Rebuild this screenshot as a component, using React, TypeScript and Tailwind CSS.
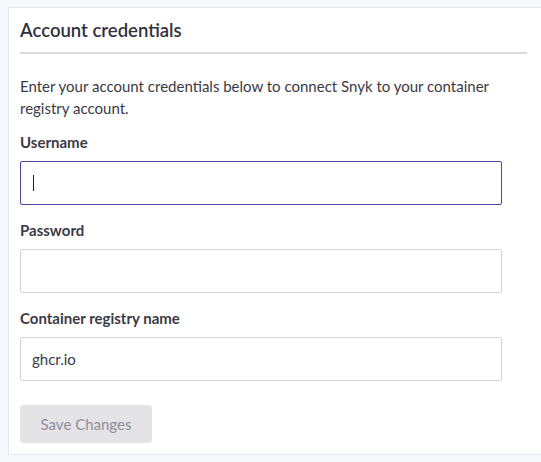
import React from "react";

export default function App() {
  return (
    <div
      className="min-h-[462px] w-[541px] overflow-hidden bg-[#f5f9fc] pl-[8px] pt-[7px]"
      style={{ fontFamily: "Lato, 'Noto Sans', sans-serif" }}
    >
      <div className="w-[560px] border border-[#e3e7ee] bg-white pl-[11px] pr-[40px] pt-[11px] pb-[11px]">
        <h2 className="border-b-2 border-[#d9d9e0] pb-[11px] text-[18.5px] font-semibold leading-[22px] text-[#32313b]">
          Account credentials
        </h2>
        <p className="mt-[21px] text-[15px] leading-[22px] text-[#3b3a45]">
          Enter your account credentials below to connect Snyk to your container registry account.
        </p>
        <div className="mt-[13px] w-[482px]">
          <label className="block text-[15px] font-bold leading-[20px] text-[#3b3a45]">Username</label>
          <div className="mt-[9px] flex h-[44px] items-center rounded-[2px] border border-[#4b45a1] px-[12px]">
            <span className="h-[16px] w-[1px] bg-[#222]" />
          </div>
          <label className="mt-[15px] block text-[15px] font-bold leading-[20px] text-[#3b3a45]">Password</label>
          <div className="mt-[9px] h-[44px] rounded-[2px] border border-[#d3d3da]" />
          <label className="mt-[15px] block text-[15px] font-bold leading-[20px] text-[#3b3a45]">
            Container registry name
          </label>
          <div className="mt-[9px] flex h-[44px] items-center rounded-[2px] border border-[#d3d3da] px-[11px] text-[15px] text-[#3b3a45]">
            ghcr.io
          </div>
          <button className="mt-[24px] h-[38px] w-[132px] rounded-[3px] bg-[#e4e4e7] text-[15px] text-[#8f8e99]">
            Save Changes
          </button>
        </div>
      </div>
    </div>
  );
}
